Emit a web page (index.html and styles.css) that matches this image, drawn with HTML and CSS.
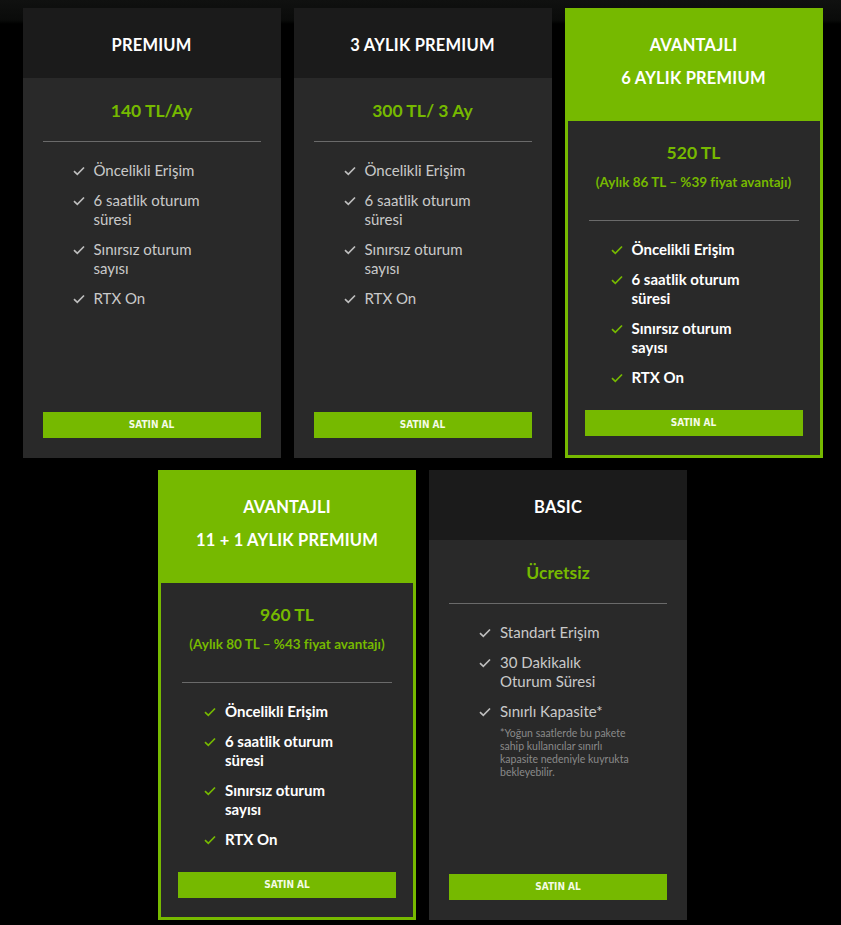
FILE: index.html
```html
<!DOCTYPE html>
<html lang="tr">
<head>
    <meta charset="utf-8" />
    <title>GeForce NOW üyelik paketleri</title>
    <link rel="stylesheet" href="styles.css">
</head>
<body>
    <svg width="0" height="0" class="defs">
        <symbol id="check" viewBox="0 0 12 10">
            <path d="M1 5.2 4.3 8.3 11 1.5" fill="none" stroke="currentColor" stroke-width="1.7" />
        </symbol>
    </svg>
    <main class="plans">
        <section class="plan">
            <header class="plan-head"><h2>PREMIUM</h2></header>
            <div class="plan-body">
                <p class="price">140 TL/Ay</p>
                <hr>
                <ul class="features">
                    <li><svg class="tick"><use href="#check"/></svg><span>Öncelikli Erişim</span></li>
                    <li><svg class="tick"><use href="#check"/></svg><span>6 saatlik oturum süresi</span></li>
                    <li><svg class="tick"><use href="#check"/></svg><span>Sınırsız oturum sayısı</span></li>
                    <li><svg class="tick"><use href="#check"/></svg><span>RTX On</span></li>
                </ul>
                <a class="buy" href="#">SATIN AL</a>
            </div>
        </section>
        <section class="plan">
            <header class="plan-head"><h2>3 AYLIK PREMIUM</h2></header>
            <div class="plan-body">
                <p class="price">300 TL/ 3 Ay</p>
                <hr>
                <ul class="features">
                    <li><svg class="tick"><use href="#check"/></svg><span>Öncelikli Erişim</span></li>
                    <li><svg class="tick"><use href="#check"/></svg><span>6 saatlik oturum süresi</span></li>
                    <li><svg class="tick"><use href="#check"/></svg><span>Sınırsız oturum sayısı</span></li>
                    <li><svg class="tick"><use href="#check"/></svg><span>RTX On</span></li>
                </ul>
                <a class="buy" href="#">SATIN AL</a>
            </div>
        </section>
        <section class="plan featured">
            <header class="plan-head"><h2>AVANTAJLI<br>6 AYLIK PREMIUM</h2></header>
            <div class="plan-body">
                <p class="price">520 TL</p>
                <p class="saving">(Aylık 86 TL – %39 fiyat avantajı)</p>
                <hr>
                <ul class="features">
                    <li><svg class="tick"><use href="#check"/></svg><span>Öncelikli Erişim</span></li>
                    <li><svg class="tick"><use href="#check"/></svg><span>6 saatlik oturum süresi</span></li>
                    <li><svg class="tick"><use href="#check"/></svg><span>Sınırsız oturum sayısı</span></li>
                    <li><svg class="tick"><use href="#check"/></svg><span>RTX On</span></li>
                </ul>
                <a class="buy" href="#">SATIN AL</a>
            </div>
        </section>
        <section class="plan featured">
            <header class="plan-head"><h2>AVANTAJLI<br>11 + 1 AYLIK PREMIUM</h2></header>
            <div class="plan-body">
                <p class="price">960 TL</p>
                <p class="saving">(Aylık 80 TL – %43 fiyat avantajı)</p>
                <hr>
                <ul class="features">
                    <li><svg class="tick"><use href="#check"/></svg><span>Öncelikli Erişim</span></li>
                    <li><svg class="tick"><use href="#check"/></svg><span>6 saatlik oturum süresi</span></li>
                    <li><svg class="tick"><use href="#check"/></svg><span>Sınırsız oturum sayısı</span></li>
                    <li><svg class="tick"><use href="#check"/></svg><span>RTX On</span></li>
                </ul>
                <a class="buy" href="#">SATIN AL</a>
            </div>
        </section>
        <section class="plan">
            <header class="plan-head"><h2>BASIC</h2></header>
            <div class="plan-body">
                <p class="price">Ücretsiz</p>
                <hr>
                <ul class="features">
                    <li><svg class="tick"><use href="#check"/></svg><span>Standart Erişim</span></li>
                    <li><svg class="tick"><use href="#check"/></svg><span>30 Dakikalık Oturum Süresi</span></li>
                    <li><svg class="tick"><use href="#check"/></svg><span>Sınırlı Kapasite*
                        <small class="note">*Yoğun saatlerde bu pakete sahip kullanıcılar sınırlı kapasite nedeniyle kuyrukta bekleyebilir.</small></span></li>
                </ul>
                <a class="buy" href="#">SATIN AL</a>
            </div>
        </section>
    </main>
</body>
</html>
```

FILE: styles.css
```css
* {
    box-sizing: border-box;
}
body {
    margin: 0;
    min-height: 925px;
    background: #000 linear-gradient(#101110, #0a0b0a 20px, #000 24px) no-repeat;
    background-size: 100% 30px;
    font-family: Lato, "Noto Sans", sans-serif;
    color: #fff;
}
.defs {
    position: absolute;
}
.plans {
    display: flex;
    flex-wrap: wrap;
    justify-content: center;
    gap: 12px 13px;
    padding: 8px 0 0 4px;
}
.plan {
    display: flex;
    flex-direction: column;
    width: 258px;
    height: 450px;
    background: #292929;
}
.plan-head {
    height: 70px;
    padding-top: 21px;
    background: #1b1b1b;
    text-align: center;
}
.plan-head h2 {
    margin: 0;
    font-size: 16.5px;
    line-height: 33px;
    font-weight: 700;
    letter-spacing: 0.2px;
}
.plan-body {
    flex: 1;
    display: flex;
    flex-direction: column;
    padding: 21px 20px 20px;
}
.price {
    margin: 0;
    text-align: center;
    font-size: 17.5px;
    line-height: 24px;
    font-weight: 700;
    color: #76b900;
}
.saving {
    margin: 9px 0 12px;
    text-align: center;
    font-size: 13.5px;
    line-height: 16px;
    font-weight: 700;
    color: #76b900;
}
hr {
    width: 100%;
    margin: 18px 0 0;
    border: 0;
    border-top: 1px solid #6a6a6a;
}
.features {
    list-style: none;
    margin: 19px 0 0 30px;
    padding: 0;
    width: 150px;
    font-size: 15px;
    line-height: 19.5px;
    color: #c9c9c9;
}
.features li {
    display: flex;
    gap: 9px;
    margin-bottom: 10px;
}
.tick {
    flex: none;
    width: 12px;
    height: 10px;
    margin-top: 5px;
    color: #bdbdbd;
}
.note {
    display: block;
    width: 136px;
    margin-top: 6px;
    font-size: 10.5px;
    line-height: 13px;
    color: #8a8a8a;
}
.buy {
    display: block;
    margin-top: auto;
    height: 26px;
    background: #76b900;
    color: #f4fbe6;
    text-decoration: none;
    text-align: center;
    font: bold 10px/26px "DejaVu Sans Condensed", "DejaVu Sans", sans-serif;
}

.featured {
    border: 3px solid #76b900;
}
.featured .plan-head {
    height: 110px;
    padding-top: 18px;
    background: #76b900;
}
.featured .plan-body {
    padding: 20px 17px 19px;
}
.featured hr {
    width: auto;
    margin-left: 4px;
    margin-right: 4px;
}
.featured .features {
    margin-left: 26px;
    width: 150px;
    color: #fff;
    font-weight: 700;
}
.featured .tick {
    color: #76b900;
}
```
